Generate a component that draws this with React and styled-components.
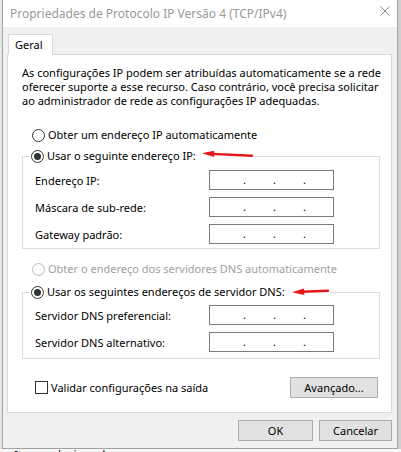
import React from "react";
import styled, { createGlobalStyle } from "styled-components";

const Global = createGlobalStyle`
  html, body { margin: 0; padding: 0; background: #f3f3f3; }
  body {
    font-family: "Noto Sans", "Liberation Sans", sans-serif;
    font-size: 11px;
    color: #000;
  }
  * { box-sizing: border-box; }
`;

const Desktop = styled.div`
  width: 401px;
  height: 452px;
  overflow: hidden;
  display: grid;
  grid-template-columns: 2px 396px 3px;
  grid-template-rows: 449px 3px;
  background: #f3f3f3;
`;

const SideStrip = styled.div`
  background: ${(p) => p.$tone};
`;

const BottomStrip = styled.div`
  grid-column: 1 / -1;
  overflow: hidden;
  background: #f7f7f7;
  padding-left: 14px;
  font-size: 12px;
  line-height: 14px;
  color: #111;
  white-space: nowrap;
`;

const Window = styled.div`
  display: flex;
  flex-direction: column;
  border: 1px solid #a3a3a3;
  border-top: none;
  background: #f0f0f0;
`;

const TitleBar = styled.div`
  height: 27px;
  flex: none;
  background: #fff;
  display: flex;
  align-items: center;
  padding-left: 7px;
`;

const Title = styled.div`
  flex: 1;
  font-size: 12px;
  color: #999;
  white-space: nowrap;
`;

const CloseBox = styled.div`
  width: 24px;
  align-self: flex-start;
  padding-top: 6px;
  display: flex;
  justify-content: center;
`;

const Body = styled.div`
  flex: 1;
  display: flex;
  flex-direction: column;
  padding: 7px 5px 7px 4px;
`;

const TabStrip = styled.div`
  display: flex;
  padding-left: 1px;
`;

const Tab = styled.div`
  position: relative;
  z-index: 1;
  height: 21px;
  margin-bottom: -1px;
  width: 45px;
  padding: 2px 0 0 6px;
  background: #fff;
  border: 1px solid #d9d9d9;
  border-bottom: none;
  line-height: 16px;
`;

const Panel = styled.div`
  background: #fff;
  border: 1px solid #d9d9d9;
  padding: 11px 11px 14px 14px;
  display: flex;
  flex-direction: column;
`;

const Intro = styled.p`
  margin: 0;
  line-height: 14px;
  white-space: nowrap;
`;

const RadioRow = styled.label`
  display: flex;
  align-items: center;
  gap: 3px;
  height: 14px;
  line-height: 14px;
  white-space: nowrap;
  margin-left: ${(p) => p.$indent || 0}px;
  margin-top: ${(p) => p.$top || 0}px;
  color: ${(p) => (p.$disabled ? "#a0a0a0" : "#000")};
`;

const Radio = styled.span`
  flex: none;
  width: 13px;
  height: 13px;
  border-radius: 50%;
  border: 1px solid ${(p) => (p.$disabled ? "#bcbcbc" : "#333")};
  background: #fff;
  display: grid;
  place-items: center;
  &::after {
    content: "";
    width: 7px;
    height: 7px;
    border-radius: 50%;
    background: ${(p) => (p.$checked ? "#333" : "transparent")};
  }
`;

const GroupBox = styled.fieldset`
  margin: ${(p) => p.$top}px 0 0 0;
  padding: 0;
  min-width: 0;
  border: 1px solid #dcdcdc;
`;

const Legend = styled.legend`
  margin-left: 7px;
  padding: 0 0 0 1px;
  background: #fff;
`;

const FieldGrid = styled.div`
  display: grid;
  grid-template-columns: 174px 125px;
  row-gap: 7px;
  align-items: center;
  padding: ${(p) => p.$pt}px 0 ${(p) => p.$pb}px 12px;
`;

const FieldLabel = styled.span`
  white-space: nowrap;
`;

const IpBox = styled.div`
  height: 20px;
  border: 1px solid #7a7a7a;
  background: #fff;
  display: flex;
  align-items: center;
  padding-left: 33px;
  gap: 28px;
`;

const Dot = styled.span`
  width: 2px;
  line-height: 14px;
`;

const OptionsRow = styled.div`
  display: flex;
  align-items: center;
  justify-content: space-between;
  margin: 18px 2px 0 13px;
  height: 21px;
`;

const CheckLabel = styled.label`
  display: flex;
  align-items: center;
  gap: 3px;
  white-space: nowrap;
`;

const CheckBox = styled.span`
  width: 13px;
  height: 13px;
  border: 1px solid #333;
  background: #fff;
`;

const Button = styled.button`
  width: ${(p) => p.$w}px;
  height: 21px;
  padding: 0;
  background: #e1e1e1;
  border: 1px solid #adadad;
  font-family: inherit;
  font-size: 11px;
  color: #000;
`;

const Footer = styled.div`
  display: flex;
  justify-content: flex-end;
  gap: 6px;
  margin-top: 7px;
`;

const CloseIcon = () => (
  <svg width="10" height="10" viewBox="0 0 10 10">
    <path d="M0.5 0.5 L9.5 9.5 M9.5 0.5 L0.5 9.5" stroke="#8a8a8a" strokeWidth="1" />
  </svg>
);

const RedArrow = ({ width, tipY, tailY, gap }) => {
  const headLen = 12;
  const dy = (tailY - tipY) / width;
  const by = tipY + dy * headLen;
  return (
    <svg
      width={width + 2}
      height="14"
      viewBox={`0 0 ${width + 2} 14`}
      style={{ marginLeft: gap, flex: "none" }}
    >
      <polygon
        points={`0,${tipY} ${headLen},${by - 3.2} ${headLen + 0.3},${by + 3.2}`}
        fill="#e8141a"
      />
      <line
        x1={headLen - 2}
        y1={by}
        x2={width}
        y2={tailY}
        stroke="#e8141a"
        strokeWidth="2.4"
        strokeLinecap="round"
      />
    </svg>
  );
};

const IpField = () => (
  <IpBox>
    <Dot>.</Dot>
    <Dot>.</Dot>
    <Dot>.</Dot>
  </IpBox>
);

export default function App() {
  return (
    <>
      <Global />
      <Desktop>
        <SideStrip $tone="#e6e6e6" />
        <Window>
          <TitleBar>
            <Title>Propriedades de Protocolo IP Versão 4 (TCP/IPv4)</Title>
            <CloseBox>
              <CloseIcon />
            </CloseBox>
          </TitleBar>
          <Body>
            <TabStrip>
              <Tab>Geral</Tab>
            </TabStrip>
            <Panel>
              <Intro>
                As configurações IP podem ser atribuídas automaticamente se a rede
                <br />
                oferecer suporte a esse recurso. Caso contrário, você precisa solicitar
                <br />
                ao administrador de rede as configurações IP adequadas.
              </Intro>
              <RadioRow $indent={10} $top={20}>
                <Radio />
                Obter um endereço IP automaticamente
              </RadioRow>
              <GroupBox $top={7}>
                <Legend>
                  <RadioRow>
                    <Radio $checked />
                    Usar o seguinte endereço IP:
                    <RedArrow width={50} tipY={4.3} tailY={6.7} gap={3} />
                  </RadioRow>
                </Legend>
                <FieldGrid $pt={7} $pb={4}>
                  <FieldLabel>Endereço IP:</FieldLabel>
                  <IpField />
                  <FieldLabel>Máscara de sub-rede:</FieldLabel>
                  <IpField />
                  <FieldLabel>Gateway padrão:</FieldLabel>
                  <IpField />
                </FieldGrid>
              </GroupBox>
              <RadioRow $indent={10} $top={13} $disabled>
                <Radio $disabled />
                Obter o endereço dos servidores DNS automaticamente
              </RadioRow>
              <GroupBox $top={9}>
                <Legend>
                  <RadioRow>
                    <Radio $checked />
                    Usar os seguintes endereços de servidor DNS:
                    <RedArrow width={36} tipY={7.3} tailY={5.7} gap={4} />
                  </RadioRow>
                </Legend>
                <FieldGrid $pt={6} $pb={6}>
                  <FieldLabel>Servidor DNS preferencial:</FieldLabel>
                  <IpField />
                  <FieldLabel>Servidor DNS alternativo:</FieldLabel>
                  <IpField />
                </FieldGrid>
              </GroupBox>
              <OptionsRow>
                <CheckLabel>
                  <CheckBox />
                  Validar configurações na saída
                </CheckLabel>
                <Button $w={88}>Avançado...</Button>
              </OptionsRow>
            </Panel>
            <Footer>
              <Button $w={75}>OK</Button>
              <Button $w={73}>Cancelar</Button>
            </Footer>
          </Body>
        </Window>
        <SideStrip $tone="#cfcfcf" />
        <BottomStrip>Itens selecionado</BottomStrip>
      </Desktop>
    </>
  );
}
